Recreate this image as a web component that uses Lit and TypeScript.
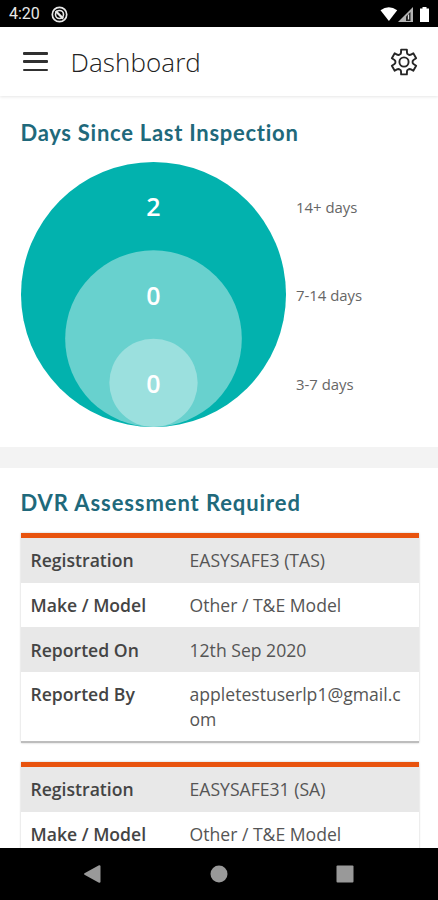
import { LitElement, html, css, svg } from "lit";
import { customElement, property } from "lit/decorators.js";

type Row = { label: string; value: string };

/** Outline of a six-toothed cog centred on 0,0. */
function cogPath(): string {
  const pts: string[] = [];
  const at = (r: number, deg: number) => {
    const a = (deg * Math.PI) / 180;
    return `${(r * Math.sin(a)).toFixed(2)} ${(-r * Math.cos(a)).toFixed(2)}`;
  };
  for (let i = 0; i < 6; i++) {
    const c = i * 60;
    pts.push(at(12.7, c - 13), at(12.7, c + 13), at(9.7, c + 18), at(8.7, c + 24), at(8.7, c + 36), at(9.7, c + 42));
  }
  return `M${pts.join("L")}Z`;
}

@customElement("status-bar")
class StatusBar extends LitElement {
  static styles = css`
    :host { display: flex; align-items: center; height: 27px; flex: none; background: #000; padding: 1px 7px 0 9px; color: #e8e8e8; font: 400 16px/26px Roboto, sans-serif; box-sizing: border-box; }
    .time { width: 42px; }
    .gap { flex: 1; }
    svg { display: block; }
  `;
  render() {
    return html`
      <span class="time">4:20</span>
      <svg width="17" height="17" viewBox="0 0 17 17" fill="none" stroke="#e8e8e8">
        <circle cx="8.5" cy="8.5" r="7.2" stroke-width="1.7" />
        <circle cx="8.5" cy="8.5" r="4" stroke-width="1.6" />
        <path d="M4.600 5l7.600 7.600" stroke-width="2.2" />
      </svg>
      <span class="gap"></span>
      <svg width="51" height="17" viewBox="0 0 51 17">
        <path d="M.5 4.2Q8.800-1.800 17.200 4.200L8.900 15Z" fill="#fff" />
        <path d="M18 16L33 1V16Z" fill="#b4b4b4" />
        <path d="M26 15V10.500L30.500 6V15Z" fill="#222" />
        <path d="M28.500 8.500V13.500" stroke="#ddd" stroke-width="1.200" />
        <path d="M42.500 1h4v1.500h2.500V16h-9V2.500h2.500z" fill="#fff" />
      </svg>`;
  }
}

@customElement("title-bar")
class TitleBar extends LitElement {
  static styles = css`
    :host { display: flex; align-items: center; height: 69px; flex: none; padding: 0 20.500px 0 23px; box-sizing: border-box; background: #fff; box-shadow: 0 1px 3px rgba(0, 0, 0, 0.1); position: relative; }
    .menu { width: 25px; height: 19px; display: flex; flex-direction: column; justify-content: space-between; }
    .menu i { display: block; height: 2.5px; border-radius: 1px; background: #303030; }
    .title { flex: 1; margin-left: 22.5px; font: 300 26px/36px "Open Sans", sans-serif; color: #222; letter-spacing: 0.08px; }
    svg { display: block; }
  `;
  render() {
    return html`
      <span class="menu"><i></i><i></i><i></i></span>
      <span class="title">Dashboard</span>
      <svg width="28" height="28" viewBox="-14 -14 28 28" fill="none" stroke="#262626" stroke-width="1.9" stroke-linejoin="round">
        <path d=${cogPath()} />
        <circle r="4.600" />
      </svg>`;
  }
}

@customElement("inspection-chart")
class InspectionChart extends LitElement {
  static styles = css`
    :host { display: grid; grid-template-columns: 265px 1fr; column-gap: 10.5px; height: 265px; font-family: "Open Sans", sans-serif; }
    svg { display: block; }
    .count { fill: #fff; font-size: 25px; font-weight: 600; text-anchor: middle; }
    .legend { display: grid; grid-template-rows: repeat(3, 1fr); align-items: center; padding-top: 1px; margin-bottom: -1px; font-size: 14.9px; color: #666; }
  `;
  bands = [
    { count: 2, label: "14+ days", color: "#02b2ae" },
    { count: 0, label: "7-14 days", color: "#68d1ce" },
    { count: 0, label: "3-7 days", color: "#9be0de" },
  ];
  render() {
    const unit = 265 / 6;
    return html`
      <svg width="265" height="265" viewBox="0 0 265 265">
        ${this.bands.map((b, i) => {
          const r = unit * (3 - i);
          return svg`<circle cx="132.500" cy=${265 - r} r=${r} fill=${b.color} />
            <text class="count" x="132.500" y=${unit * (2 * i + 1) + 10.2}>${b.count}</text>`;
        })}
      </svg>
      <div class="legend">${this.bands.map((b) => html`<span>${b.label}</span>`)}</div>`;
  }
}

@customElement("vehicle-card")
class VehicleCard extends LitElement {
  @property({ attribute: false }) rows: Row[] = [];
  static styles = css`
    :host { display: block; border-top: 5px solid #e8530e; border-bottom: 2.5px solid #bdbdbd; box-shadow: 0 0 2px rgba(0, 0, 0, 0.22); font: 400 17.6px/24.7px "Open Sans", sans-serif; color: #555; background: #fff; }
    .row { display: grid; grid-template-columns: 159px 1fr; padding: 10.400px 16px 9.600px 10px; }
    .row:nth-child(odd) { background: #e8e8e8; }
    .label { font-weight: 600; color: #444; }
    .value { overflow-wrap: anywhere; }
  `;
  render() {
    return this.rows.map((r) => html`<div class="row"><span class="label">${r.label}</span><span class="value">${r.value}</span></div>`);
  }
}

@customElement("nav-bar")
class NavBar extends LitElement {
  static styles = css`
    :host { display: flex; justify-content: space-between; align-items: center; height: 52px; flex: none; padding: 0 84px 0 83px; box-sizing: border-box; background: #000; }
    svg { display: block; fill: #999; }
  `;
  render() {
    return html`
      <svg width="18" height="18"><path d="M1.500 8.200L16 .3Q17.500 0 17.500 1.500V16.500Q17.500 18 16 17.700L1.500 9.800Q.4 9 1.500 8.200Z" /></svg>
      <svg width="18" height="18"><circle cx="9" cy="9" r="8.500" /></svg>
      <svg width="18" height="18"><rect x=".5" y=".5" width="17" height="17" rx="1" /></svg>`;
  }
}

@customElement("app-root")
class AppRoot extends LitElement {
  static styles = css`
    :host { display: flex; flex-direction: column; height: 900px; background: #fff; overflow: hidden; }
    .body { flex: 1; min-height: 0; overflow: hidden; background: #f3f3f3; display: flex; flex-direction: column; gap: 21px; }
    section { flex: none; background: #fff; padding: 21px 19.5px 20px 20.5px; }
    h2 { margin: 0; font: 700 22px/32px Lato, sans-serif; color: #20697b; letter-spacing: 0.73px; }
    .inspect h2 { margin-bottom: 13px; }
    .assess { padding-top: 19px; }
    .assess h2 { margin-bottom: 14px; letter-spacing: 0.9px; }
    .cards { display: flex; flex-direction: column; gap: 18.500px; }
  `;
  cards: Row[][] = [
    [
      { label: "Registration", value: "EASYSAFE3 (TAS)" },
      { label: "Make / Model", value: "Other / T&E Model" },
      { label: "Reported On", value: "12th Sep 2020" },
      { label: "Reported By", value: "appletestuserlp1@gmail.com" },
    ],
    [
      { label: "Registration", value: "EASYSAFE31 (SA)" },
      { label: "Make / Model", value: "Other / T&E Model" },
    ],
  ];
  render() {
    return html`
      <status-bar></status-bar>
      <title-bar></title-bar>
      <div class="body">
        <section class="inspect">
          <h2>Days Since Last Inspection</h2>
          <inspection-chart></inspection-chart>
        </section>
        <section class="assess">
          <h2>DVR Assessment Required</h2>
          <div class="cards">${this.cards.map((rows) => html`<vehicle-card .rows=${rows}></vehicle-card>`)}</div>
        </section>
      </div>
      <nav-bar></nav-bar>`;
  }
}
